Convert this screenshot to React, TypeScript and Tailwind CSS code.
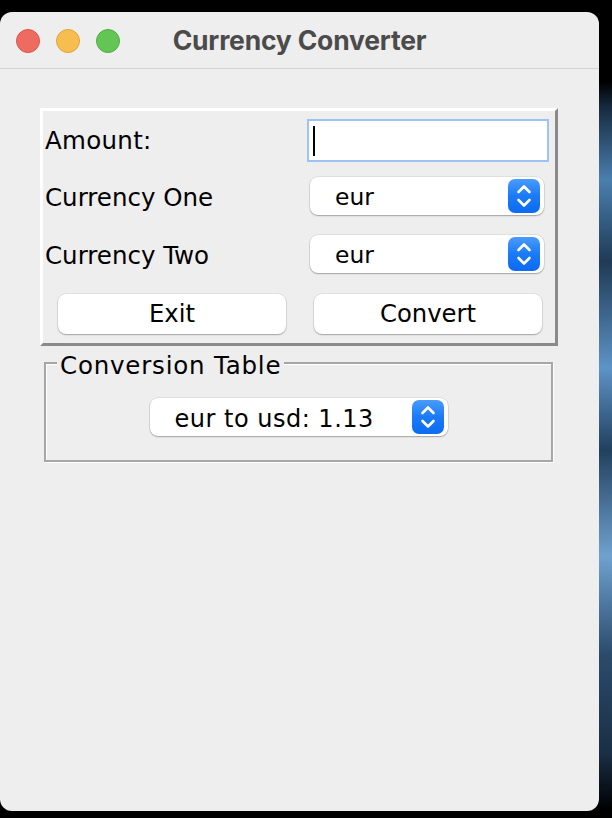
import React from "react";

const bodyFont = { fontFamily: '"DejaVu Sans", "Lucida Grande", sans-serif' };

function Stepper() {
  return (
    <div className="w-[32px] h-[34px] rounded-[7px] bg-[linear-gradient(180deg,#4a9cfc_0%,#1a7af7_50%,#0b6bf2_100%)] flex items-center justify-center shrink-0">
      <svg width="32" height="34" viewBox="0 0 32 34" fill="none">
        <path d="M10.5 13 L16 7.5 L21.5 13" stroke="white" strokeWidth="2.6" strokeLinecap="round" strokeLinejoin="round" />
        <path d="M10.5 21 L16 26.5 L21.5 21" stroke="white" strokeWidth="2.6" strokeLinecap="round" strokeLinejoin="round" />
      </svg>
    </div>
  );
}

function Combo({ value, width, textCls }: { value: string; width: string; textCls: string }) {
  return (
    <div
      className={`${width} h-[38px] bg-white rounded-[8px] shadow-[0_0_0_0.5px_rgba(0,0,0,0.12),0_1px_1.5px_rgba(0,0,0,0.28)] flex items-center justify-between pr-[4px] pl-[25px]`}
    >
      <span className={`text-black leading-none pt-[3px] ${textCls}`}>{value}</span>
      <Stepper />
    </div>
  );
}

function Btn({ label }: { label: string }) {
  return (
    <div className="w-[228px] h-[40px] bg-white rounded-[8px] shadow-[0_0_0_0.5px_rgba(0,0,0,0.12),0_1px_1.5px_rgba(0,0,0,0.28)] flex items-center justify-center text-black leading-none text-[24.3px]">
      {label}
    </div>
  );
}

export default function App() {
  return (
    <div className="w-[612px] h-[818px] bg-black flex overflow-hidden">
      <div className="w-[599px] h-[799px] mt-[12px] bg-[#eeeeee] rounded-[12px] flex flex-col shrink-0">
        {/* Title bar */}
        <div className="h-[57px] border-b border-[#d3d3d3] flex items-center relative shrink-0">
          <div className="flex gap-[16px] pl-[16px] pt-[1px]">
            <div className="w-[24px] h-[24px] rounded-full bg-[#ee6b60] border border-[#d9574d]" />
            <div className="w-[24px] h-[24px] rounded-full bg-[#f5be4f] border border-[#dea63c]" />
            <div className="w-[24px] h-[24px] rounded-full bg-[#62c554] border border-[#4fae43]" />
          </div>
          <div
            className="absolute inset-0 flex items-center justify-center text-[26.5px] font-bold text-[#4b4b4b] tracking-[-0.2px] pt-[1px]"
            style={{ fontFamily: 'Inter, "Liberation Sans", sans-serif' }}
          >
            Currency Converter
          </div>
        </div>

        {/* Content */}
        <div className="flex flex-col pt-[39px] text-[24.5px]" style={bodyFont}>
          {/* Panel 1 */}
          <div className="ml-[40px] w-[518px] h-[238px] border-[3px] border-t-white border-l-white border-r-[#8a8a8a] border-b-[#8a8a8a] flex flex-col pt-[8px]">
            <div className="flex items-center h-[43px]">
              <div className="w-[264px] pl-[2px] text-black pt-[2px] tracking-[0.3px]">Amount:</div>
              <div className="w-[242px] h-[43px] bg-white border-2 border-[#9cc3f1] flex items-center pl-[4px]">
                <div className="w-[2px] h-[30px] bg-black" />
              </div>
            </div>
            <div className="flex items-center h-[38px] mt-[15px]">
              <div className="w-[267px] pl-[2px] text-black pt-[5px]">Currency One</div>
              <Combo value="eur" width="w-[234px]" textCls="text-[23.4px]" />
            </div>
            <div className="flex items-center h-[38px] mt-[20px]">
              <div className="w-[267px] pl-[2px] text-black pt-[5px]">Currency Two</div>
              <Combo value="eur" width="w-[234px]" textCls="text-[23.4px]" />
            </div>
            <div className="flex items-center mt-[21px] pl-[15px] gap-[28px]">
              <Btn label="Exit" />
              <Btn label="Convert" />
            </div>
          </div>

          {/* Panel 2 */}
          <div className="ml-[44px] mt-[16px] w-[509px] h-[100px] border-2 border-[#a6a6a6] shadow-[inset_1px_1px_0_#fff,1px_1px_0_#fff] relative flex justify-center pt-[34px]">
            <div className="absolute -top-[12px] left-[11px] px-[3px] bg-[#eeeeee] text-black leading-[28px] text-[24.5px] tracking-[0.8px]">
              Conversion Table
            </div>
            <Combo value="eur to usd: 1.13" width="w-[298px]" textCls="text-[24px] tracking-[0.5px]" />
          </div>
        </div>
      </div>
      <div className="flex-1 h-full bg-[linear-gradient(180deg,#000_0%,#000_10%,#16293d_13%,#4a7fae_22%,#1f3a55_32%,#5d93c6_45%,#22405e_55%,#6fa1cf_68%,#2b4b6b_80%,#1a2f45_92%,#000_99%)]" />
    </div>
  );
}
